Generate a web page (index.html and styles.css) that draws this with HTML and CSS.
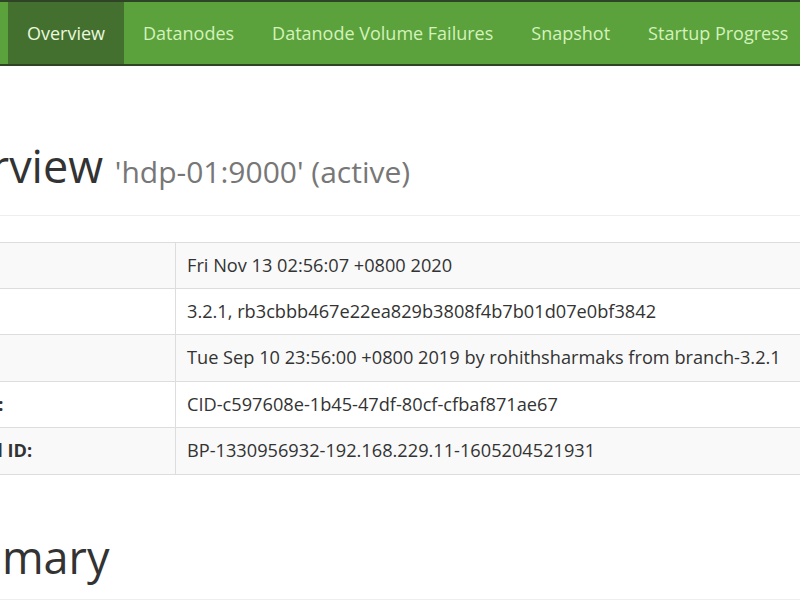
FILE: index.html
```html
<!DOCTYPE html>
<html lang="en">
<head>
    <meta charset="UTF-8">
    <meta name="viewport" content="width=device-width, initial-scale=1.0">
    <title>Namenode information</title>
    <link rel="stylesheet" href="styles.css">
</head>
<body>
    <header class="navbar">
        <ul class="nav">
            <li class="active"><a href="#tab-overview">Overview</a></li>
            <li><a href="#tab-datanode">Datanodes</a></li>
            <li><a href="#tab-datanode-volume-failures">Datanode Volume Failures</a></li>
            <li><a href="#tab-snapshot">Snapshot</a></li>
            <li><a href="#tab-startup-progress">Startup Progress</a></li>
            <li><a href="#">Utilities</a></li>
        </ul>
    </header>

    <main class="container">
        <div class="page-header">
            <h1>Overview <small>'hdp-01:9000' (active)</small></h1>
        </div>

        <table class="table">
            <tr><th>Started:</th><td>Fri Nov 13 02:56:07 +0800 2020</td></tr>
            <tr><th>Version:</th><td>3.2.1, rb3cbbb467e22ea829b3808f4b7b01d07e0bf3842</td></tr>
            <tr><th>Compiled:</th><td>Tue Sep 10 23:56:00 +0800 2019 by rohithsharmaks from branch-3.2.1</td></tr>
            <tr><th>Cluster ID:</th><td>CID-c597608e-1b45-47df-80cf-cfbaf871ae67</td></tr>
            <tr><th>Block Pool ID:</th><td>BP-1330956932-192.168.229.11-1605204521931</td></tr>
        </table>

        <div class="page-header">
            <h1>Summary</h1>
        </div>
    </main>
</body>
</html>
```

FILE: styles.css
```css
* {
    box-sizing: border-box;
}

html, body {
    overflow: hidden;
}

body {
    margin: 0;
    font-family: "Open Sans", "Noto Sans CJK SC", sans-serif;
    font-size: 18.2px;
    color: #333;
    background-color: #fff;
}

/* top bar */
.navbar {
    height: 66px;
    background-color: #5ca23c;
    border-top: 2px solid #2f4427;
    border-bottom: 2px solid #2f4427;
}

.nav {
    list-style: none;
    margin: 0;
    padding: 0 0 0 8px;
    display: flex;
    white-space: nowrap;
}

.nav a {
    display: block;
    padding: 0 19px;
    line-height: 62px;
    font-size: 18px;
    color: #d3f2bb;
    text-decoration: none;
}

.nav .active a {
    background-color: #44702f;
    color: #eaf8de;
}

/* content */
.container {
    width: 1100px;
    margin-left: -92px;
    padding-top: 18px;
}

.page-header {
    margin: 57px 0 26px;
    padding-bottom: 9px;
    border-bottom: 1px solid #eee;
}

h1 {
    margin: 0 0 8px;
    font-size: 45px;
    font-weight: 400;
    line-height: 50.6px;
    color: #333;
}

h1 small {
    font-size: 30px;
    color: #777;
}

.table {
    width: 100%;
    border-collapse: collapse;
    margin-bottom: 20px;
}

.table th,
.table td {
    padding: 10px 11px;
    line-height: 25.4px;
    border: 1px solid #ddd;
    text-align: left;
    vertical-align: top;
    white-space: nowrap;
}

.table th {
    width: 267px;
    font-weight: 700;
    text-indent: -11px;
}

.table tr:nth-child(odd) {
    background-color: #f9f9f9;
}
```
